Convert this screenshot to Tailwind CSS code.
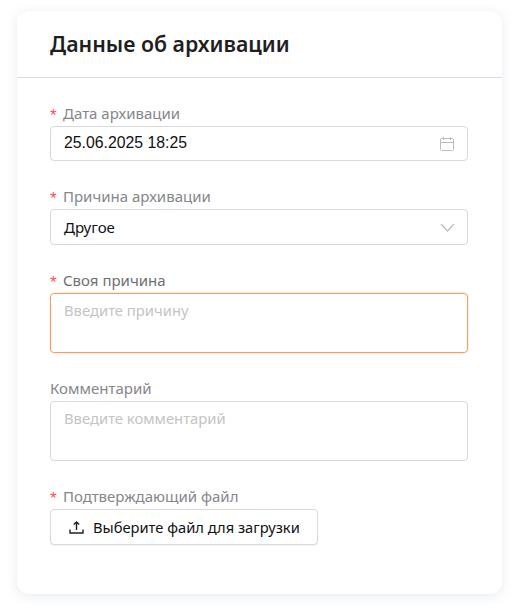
<!DOCTYPE html>
<html lang="ru">
<head>
  <meta charset="UTF-8" />
  <meta name="viewport" content="width=device-width, initial-scale=1.0" />
  <title>Данные об архивации</title>
  <script src="https://cdn.jsdelivr.net/npm/@tailwindcss/browser@4"></script>
</head>
<body class="bg-white font-['Noto_Sans',sans-serif] overflow-hidden">
  <div class="h-[608px] pt-[11px] pl-[17px]">
    <div class="w-[485px] h-[583px] bg-white rounded-[12px] shadow-[0_2px_12px_rgba(60,80,120,0.12)]">
      <!-- header -->
      <div class="h-[67px] pl-[33px] pb-[1px] flex items-center border-b border-[#dcdcdc]">
        <h1 class="text-[21.3px] leading-[28px] font-semibold text-[#1f1f1f]">Данные об архивации</h1>
      </div>

      <form class="pt-[26px] pl-[33px] w-[451px] flex flex-col gap-[26px]">
        <div>
          <label class="flex items-center h-[22px] pb-[3px] text-[15px] text-[#86868b]"><span class="w-[13px] pt-[4px] font-['Liberation_Sans',sans-serif] text-[17px] text-[#ff4d4f]">*</span>Дата архивации</label>
          <div class="h-[35px] border border-[#d9d9d9] rounded-[4px] flex items-center justify-between pl-[13px] pr-[12px] pb-[2px]">
            <span class="font-['Liberation_Sans',sans-serif] text-[15.8px] text-[#111]">25.06.2025 18:25</span>
            <svg class="w-[16px] h-[16px] mt-[2px] text-[#bdbdbd]" viewBox="0 0 16 16" fill="none" stroke="currentColor" stroke-width="1">
              <rect x="1.5" y="2.5" width="13" height="12" rx="1" />
              <path d="M1.5 6.5h13M4.5 1v3M11.5 1v3" />
            </svg>
          </div>
        </div>

        <div>
          <label class="flex items-center h-[22px] pb-[3px] text-[15px] text-[#86868b]"><span class="w-[13px] pt-[4px] font-['Liberation_Sans',sans-serif] text-[17px] text-[#ff4d4f]">*</span>Причина архивации</label>
          <div class="h-[36px] border border-[#d9d9d9] rounded-[4px] flex items-center justify-between pl-[13px] pr-[12px]">
            <span class="text-[15px] text-[#111]">Другое</span>
            <svg class="w-[15px] h-[9px] text-[#bdbdbd]" viewBox="0 0 15 9" fill="none" stroke="currentColor" stroke-width="1.2">
              <path d="M1 1l6.5 7L14 1" />
            </svg>
          </div>
        </div>

        <div>
          <label class="flex items-center h-[22px] pb-[3px] text-[15px] text-[#6f6f73]"><span class="w-[13px] pt-[4px] font-['Liberation_Sans',sans-serif] text-[17px] text-[#ff4d4f]">*</span>Своя причина</label>
          <div class="h-[60px] border border-[#ff9a5c] rounded-[4px] pl-[13px] pt-[5px] text-[14.8px] leading-[22px] text-[#c4c4c4] shadow-[0_0_0_1px_rgba(255,154,92,0.12)]">Введите причину</div>
        </div>

        <div>
          <label class="flex items-center h-[22px] pb-[3px] text-[15px] text-[#86868b]">Комментарий</label>
          <div class="h-[60px] border border-[#d9d9d9] rounded-[4px] pl-[13px] pt-[5px] text-[14.8px] leading-[22px] text-[#c4c4c4]">Введите комментарий</div>
        </div>

        <div>
          <label class="flex items-center h-[22px] pb-[3px] text-[15px] text-[#86868b]"><span class="w-[13px] pt-[4px] font-['Liberation_Sans',sans-serif] text-[17px] text-[#ff4d4f]">*</span>Подтверждающий файл</label>
          <button type="button" class="h-[36px] w-[268px] border border-[#d9d9d9] rounded-[4px] flex items-center pl-[18px] text-[14.7px] text-[#111] shadow-[0_1px_2px_rgba(0,0,0,0.06)]">
            <svg class="w-[15px] h-[15px] mr-[9px] text-[#222]" viewBox="0 0 15 15" fill="none" stroke="currentColor" stroke-width="1.4">
              <path d="M7.5 10V2M4.8 4.6l2.7-2.7 2.7 2.7M1 9.5V13h13V9.5" />
            </svg>
            Выберите файл для загрузки
          </button>
        </div>
      </form>
    </div>
  </div>
</body>
</html>
